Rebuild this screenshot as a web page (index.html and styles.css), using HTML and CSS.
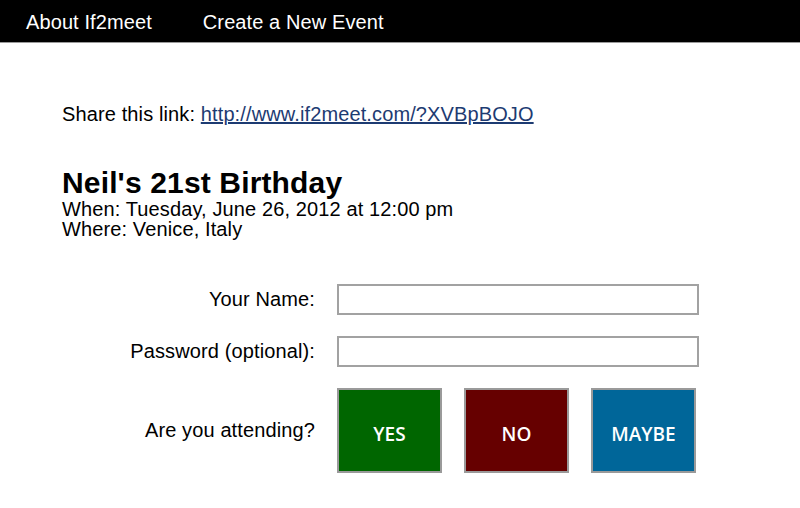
FILE: index.html
```html
<!DOCTYPE html>
<html>
<head>
<meta charset="utf-8">
<link rel="stylesheet" href="styles.css">
</head>
<body>
<nav class="nav">
  <a class="nav-link" href="#">About If2meet</a>
  <a class="nav-link" href="#">Create a New Event</a>
</nav>
<main class="content">
  <p class="share">Share this link: <a class="share-link" href="#">http://www.if2meet.com/?XVBpBOJO</a></p>
  <section class="event">
    <h1 class="event-title">Neil's 21st Birthday</h1>
    <div class="event-line">When: Tuesday, June 26, 2012 at 12:00 pm</div>
    <div class="event-line">Where: Venice, Italy</div>
  </section>
  <form class="form">
    <label class="form-label" for="name">Your Name:</label>
    <input class="form-input" id="name" type="text">
    <label class="form-label" for="pw">Password (optional):</label>
    <input class="form-input" id="pw" type="password">
    <span class="form-label">Are you attending?</span>
    <div class="choices">
      <button type="button" class="choice choice-yes">YES</button>
      <button type="button" class="choice choice-no">NO</button>
      <button type="button" class="choice choice-maybe">MAYBE</button>
    </div>
  </form>
</main>
</body>
</html>
```
FILE: styles.css
```css
html, body {
  margin: 0;
  padding: 0;
  background: #fff;
}
body {
  font-family: "Liberation Sans", Arial, Helvetica, sans-serif;
  color: #000;
}
.nav {
  height: 42px;
  background: #000;
  border-bottom: 1px solid #9a9a9a;
  display: flex;
  align-items: center;
  padding-left: 26px;
  gap: 51px;
}
.nav-link {
  color: #fff;
  text-decoration: none;
  font-size: 20px;
  line-height: 24px;
  letter-spacing: 0.1px;
  position: relative;
  top: 1px;
}
.content {
  padding: 0 0 0 62px;
  letter-spacing: 0.12px;
}
.share {
  margin: 60px 0 0;
  font-size: 20px;
  line-height: 23px;
}
.share-link {
  color: #1d3b72;
  text-decoration: underline;
}
.event {
  margin-top: 40px;
}
.event-title {
  margin: 0;
  font-size: 30px;
  line-height: 33px;
  font-weight: bold;
  letter-spacing: 0.15px;
}
.event-line {
  font-size: 20px;
  line-height: 20px;
}
.form {
  margin-top: 45px;
  display: grid;
  grid-template-columns: 253px 362px;
  column-gap: 22px;
  row-gap: 21px;
  align-items: center;
}
.form-label {
  text-align: right;
  font-size: 20px;
  line-height: 23px;
}
.form-input {
  box-sizing: border-box;
  width: 362px;
  height: 31px;
  margin: 0;
  border: 2px solid #a2a2a2;
  background: #fff;
  padding: 2px 6px;
  font-size: 16px;
}
.choices {
  display: flex;
  gap: 22px;
}
.choice {
  box-sizing: border-box;
  width: 105px;
  height: 85px;
  margin: 0;
  border: 2px solid #9a9a9a;
  color: #fff;
  font-family: "Open Sans", "Liberation Sans", sans-serif;
  font-weight: 600;
  font-size: 19px;
  letter-spacing: 0;
  padding: 6px 0 0;
  cursor: pointer;
}
.choice-yes { background: #006600; }
.choice-no { background: #660000; }
.choice-maybe { background: #006699; }
```
